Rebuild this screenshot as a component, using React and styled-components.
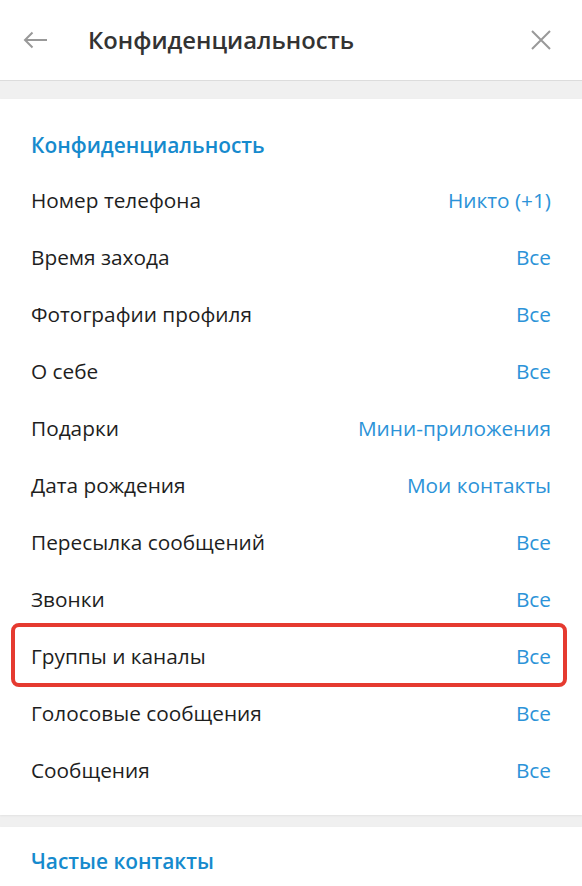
import React from 'react'
import styled, { createGlobalStyle } from 'styled-components'

const GlobalStyle = createGlobalStyle`
  html, body {
    margin: 0;
    padding: 0;
    background: #f0f0f0;
    font-family: "Open Sans", "Noto Sans", sans-serif;
    -webkit-font-smoothing: antialiased;
  }
`;

const Page = styled.div`
  width: 582px;
  min-height: 886px;
  background: #f0f0f0;
  overflow: hidden;
`;

const Header = styled.div`
  height: 81px;
  display: flex;
  align-items: center;
  background: #fff;
  border-bottom: 1px solid #dcdcdc;
  padding: 0 28px 0 22px;
  box-sizing: border-box;
`;

const IconButton = styled.button`
  border: 0;
  background: none;
  padding: 0;
  width: 26px;
  height: 26px;
  display: flex;
  align-items: center;
  justify-content: center;
  color: #999;
  cursor: pointer;
`;

const HeaderTitle = styled.h1`
  flex: 1;
  margin: 0 0 0 40px;
  font-size: 23.8px;
  font-weight: 600;
  color: #333;
`;

const Card = styled.section`
  background: #fff;
  margin-top: ${props => props.gap}px;
  padding: ${props => props.padTop}px 0 17px;
  box-shadow: 0 1px 2px rgba(0, 0, 0, 0.06);
`;

const SectionTitle = styled.div`
  height: ${props => props.height}px;
  display: flex;
  align-items: center;
  padding: 0 31px;
  font-size: 20.9px;
  font-weight: 600;
  color: #168acd;
`;

const Row = styled.div`
  position: relative;
  height: 57px;
  display: flex;
  align-items: center;
  justify-content: space-between;
  padding: 0 31px;
  font-size: 20.8px;
  color: #1e1e1e;

  ${props => props.highlighted && `
    &::after {
      content: '';
      position: absolute;
      top: -4px;
      bottom: -3px;
      left: 11px;
      right: 15px;
      border: 4px solid #e53a30;
      border-radius: 8px;
      pointer-events: none;
    }
  `}
`;

const Value = styled.span`
  color: #2c93d8;
`;

const rows = [
  ['Номер телефона', 'Никто (+1)'],
  ['Время захода', 'Все'],
  ['Фотографии профиля', 'Все'],
  ['О себе', 'Все'],
  ['Подарки', 'Мини-приложения'],
  ['Дата рождения', 'Мои контакты'],
  ['Пересылка сообщений', 'Все'],
  ['Звонки', 'Все'],
  ['Группы и каналы', 'Все', true],
  ['Голосовые сообщения', 'Все'],
  ['Сообщения', 'Все'],
];

const BackIcon = () => (
  <svg width="26" height="26" viewBox="0 0 26 26" fill="none" stroke="currentColor" strokeWidth="2">
    <path d="M25 13H3" />
    <path d="M10.5 5.5L3 13l7.5 7.5" />
  </svg>
);

const CloseIcon = () => (
  <svg width="20" height="20" viewBox="0 0 20 20" fill="none" stroke="currentColor" strokeWidth="2">
    <path d="M1 1l18 18M19 1L1 19" />
  </svg>
);

export default function App() {
  return (
    <Page>
      <GlobalStyle />
      <Header>
        <IconButton aria-label="Назад"><BackIcon /></IconButton>
        <HeaderTitle>Конфиденциальность</HeaderTitle>
        <IconButton aria-label="Закрыть"><CloseIcon /></IconButton>
      </Header>

      <Card gap={18} padTop={19}>
        <SectionTitle height={53}>Конфиденциальность</SectionTitle>
        {rows.map(([label, value, highlighted]) => (
          <Row key={label} highlighted={highlighted}>
            <span>{label}</span>
            <Value>{value}</Value>
          </Row>
        ))}
      </Card>

      <Card gap={12} padTop={7}>
        <SectionTitle height={53}>Частые контакты</SectionTitle>
      </Card>
    </Page>
  );
}
